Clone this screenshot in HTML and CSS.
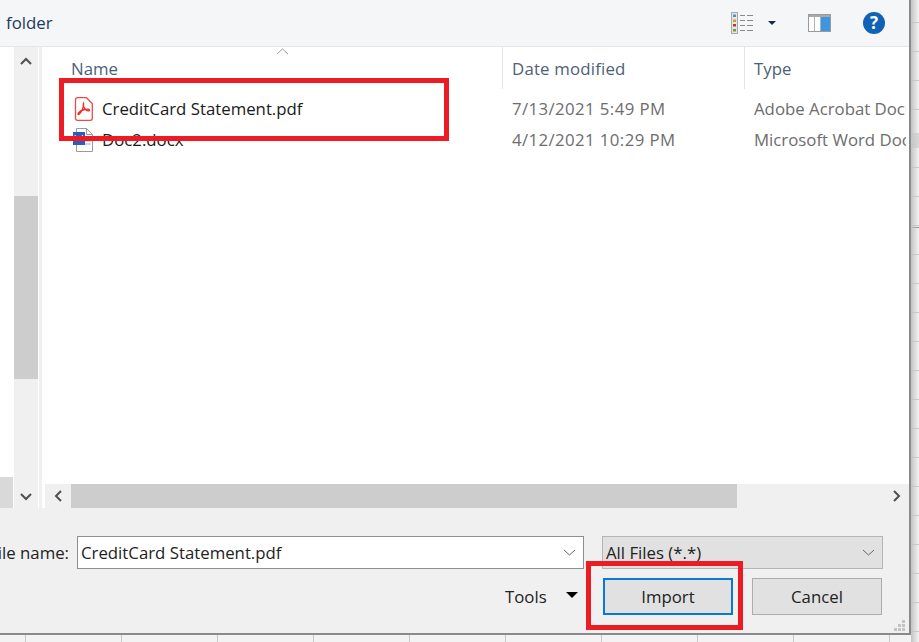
FILE: index.html
```html
<!DOCTYPE html>
<html lang="en">
<head>
    <meta charset="UTF-8">
    <title>Import file</title>
    <link rel="stylesheet" href="styles.css">
</head>
<body>
    <div class="dialog">
        <div class="toolbar">
            <span class="toolbar-title">folder</span>
            <div class="toolbar-icons">
                <svg class="icon-views" width="23" height="22" viewBox="0 0 23 22">
                    <rect x="0.5" y="0.500" width="6" height="21" fill="#e6e6e6" stroke="#a8a8a8"/>
                    <rect x="2" y="2.500" width="3" height="2.500" fill="#5a8fc0"/>
                    <rect x="2" y="7.500" width="3" height="2.500" fill="#c9a227"/>
                    <rect x="2" y="12" width="3" height="2.500" fill="#c8332b"/>
                    <rect x="2" y="17" width="3" height="2.500" fill="#6da04a"/>
                    <path d="M9 3.500h5M16 3.500h6M9 8.500h5M16 8.500h6M9 13.500h5M16 13.500h6M9 18.500h5M16 18.500h6" stroke="#8a8a8a"/>
                </svg>
                <span class="caret-small"></span>
                <svg class="icon-pane" width="23" height="18" viewBox="0 0 23 18">
                    <rect x="0.5" y="0.500" width="22" height="17" fill="#fff" stroke="#9a9a9a"/>
                    <rect x="1" y="1" width="21" height="2" fill="#a9a9a9"/>
                    <rect x="13" y="3" width="9" height="14" fill="#3f96e0"/>
                    <path d="M6.500 3v14M12.500 3v14" stroke="#b0b0b0"/>
                </svg>
                <span class="icon-help">?</span>
            </div>
        </div>

        <div class="browser">
            <div class="nav-pane">
                <div class="nav-left"><div class="nav-selected"></div></div>
                <div class="vscroll">
                    <svg class="chev" width="12" height="8" viewBox="0 0 12 8"><path d="M1 7l5-5 5 5" fill="none" stroke="#505050" stroke-width="2"/></svg>
                    <div class="vtrack"><div class="vthumb"></div></div>
                    <svg class="chev" width="12" height="8" viewBox="0 0 12 8"><path d="M1 1l5 5 5-5" fill="none" stroke="#505050" stroke-width="2"/></svg>
                </div>
            </div>
            <div class="file-pane">
                <div class="file-list">
                    <svg class="sort-arrow" width="13" height="7" viewBox="0 0 13 7"><path d="M1 6l5.500-5 5.500 5" fill="none" stroke="#9b9b9b"/></svg>
                    <div class="file-head">
                        <div class="col-name">Name</div>
                        <div class="col-date">Date modified</div>
                        <div class="col-type">Type</div>
                    </div>
                    <div class="file-row">
                        <div class="col-name file-name">
                            <svg width="20" height="24" viewBox="0 0 20 24">
                                <path d="M4.500.7h9l5.800 5.800v14.800a2 2 0 0 1-2 2H4.500a2 2 0 0 1-2-2V2.700a2 2 0 0 1 2-2z" fill="#fff" stroke="#ee4a44" stroke-width="1.300"/>
                                <path d="M10.500 6.500c-1 2 1 5 2.500 6.500s3.800 1 3.500 0-3.500-.8-6.500 0-5 3-5 4 1.500.6 3-2 3-5 2.500-8.500z" fill="none" stroke="#e8302a" stroke-width="1.300"/>
                            </svg>
                            <span>CreditCard Statement.pdf</span>
                        </div>
                        <div class="col-date">7/13/2021 5:49 PM</div>
                        <div class="col-type">Adobe Acrobat Document</div>
                    </div>
                    <div class="file-row">
                        <div class="col-name file-name">
                            <svg width="20" height="24" viewBox="0 0 20 24">
                                <path d="M3.500.5h10l6 6v17h-16z" fill="#fff" stroke="#9a9a9a"/>
                                <path d="M13.500.5v6h6" fill="none" stroke="#9a9a9a"/>
                                <path d="M12 10h6M12 13h6M12 16h6" stroke="#9fb4d0"/>
                                <rect x="0" y="4" width="12" height="13" fill="#2a5fbd"/>
                                <path d="M2 7l1.500 6 2-5 2 5 2-6" fill="none" stroke="#fff"/>
                            </svg>
                            <span>Doc2.docx</span>
                        </div>
                        <div class="col-date">4/12/2021 10:29 PM</div>
                        <div class="col-type">Microsoft Word Document</div>
                    </div>
                </div>
                <div class="hscroll">
                    <div class="hbtn"><svg width="8" height="12" viewBox="0 0 8 12"><path d="M7 1L2 6l5 5" fill="none" stroke="#505050" stroke-width="2"/></svg></div>
                    <div class="htrack"><div class="hthumb"></div></div>
                    <div class="hbtn"><svg width="8" height="12" viewBox="0 0 8 12"><path d="M1 1l5 5-5 5" fill="none" stroke="#505050" stroke-width="2"/></svg></div>
                </div>
            </div>
        </div>

        <div class="footer">
            <div class="footer-row">
                <div class="file-label"><span>File name:</span></div>
                <div class="name-combo">
                    <span>CreditCard Statement.pdf</span>
                    <svg width="13" height="7" viewBox="0 0 13 7"><path d="M1 1l5.500 5 5.500-5" fill="none" stroke="#666"/></svg>
                </div>
                <div class="type-combo">
                    <span>All Files (*.*)</span>
                    <svg width="13" height="7" viewBox="0 0 13 7"><path d="M1 1l5.500 5 5.500-5" fill="none" stroke="#666"/></svg>
                </div>
            </div>
            <div class="footer-row footer-actions">
                <span class="tools">Tools</span>
                <span class="caret-big"></span>
                <button class="btn btn-primary">Import</button>
                <button class="btn">Cancel</button>
            </div>
            <svg class="grip" width="12" height="12" viewBox="0 0 12 12"><path d="M8 0h3v3H8zM4 4h3v3H4zM8 4h3v3H8zM0 8h3v3H0zM4 8h3v3H4zM8 8h3v3H8z" fill="#c4c4c4"/></svg>
        </div>

        <div class="mark mark-file"></div>
        <div class="mark mark-import"></div>
    </div>

    <div class="sheet"></div>
</body>
</html>
```

FILE: styles.css
```css
html, body {
    margin: 0;
    padding: 0;
    height: 642px;
    overflow: hidden;
}
body {
    display: flex;
    align-items: flex-start;
    background-color: #f3f3f3;
    background-image:
        linear-gradient(to right, #c9c9c9 1px, transparent 1px),
        linear-gradient(#c9c9c9 1px, transparent 1px);
    background-size: 96px 100%, 100% 29px;
    background-position: 25px 0, 0 22px;
    font-family: "Open Sans", "Noto Sans", sans-serif;
    color: #222;
}
.dialog {
    position: relative;
    width: 909px;
    height: 633px;
    flex: none;
    display: flex;
    flex-direction: column;
    background-color: #f0f0f0;
    border-right: 2px solid #8a8a8a;
    border-bottom: 2px solid #8a8a8a;
}
.sheet {
    flex: 1;
    align-self: stretch;
    background-image:
        linear-gradient(to right, #c4c4c4, transparent),
        linear-gradient(to bottom, transparent 133px, #d8d8d8 133px, #d8d8d8 148px, transparent 148px, transparent 227px, #8a8a8a 227px, #8a8a8a 228px, transparent 228px);
}

/* top bar */
.toolbar {
    height: 46px;
    flex: none;
    display: flex;
    align-items: center;
    justify-content: space-between;
    background-color: #f5f6f7;
    border-bottom: 1px solid #e6e6e6;
}
.toolbar-title {
    margin: 0 0 2px 6px;
    font-size: 16.800px;
    color: #1e3a5f;
}
.toolbar-icons {
    display: flex;
    align-items: center;
    margin-right: 24px;
}
.icon-views {
    margin-right: 14px;
}
.caret-small {
    width: 0;
    height: 0;
    border-left: 4px solid transparent;
    border-right: 4px solid transparent;
    border-top: 4px solid #1a2a4a;
    margin-right: 32px;
}
.icon-pane {
    margin-right: 32px;
}
.icon-help {
    width: 22px;
    height: 22px;
    border-radius: 50%;
    background-color: #0f62b5;
    color: #fff;
    font-size: 17px;
    font-weight: 700;
    line-height: 22px;
    text-align: center;
}

/* list area */
.browser {
    flex: 1;
    display: flex;
    background-color: #fff;
    min-height: 0;
}
.nav-pane {
    width: 39px;
    flex: none;
    display: flex;
    background-color: #fff;
    border-right: 3px solid #f0f0f0;
}
.nav-left {
    width: 13px;
    margin-right: 1px;
    display: flex;
    align-items: flex-end;
}
.nav-selected {
    width: 100%;
    height: 31px;
    background-color: #d9d9d9;
}
.vscroll {
    width: 24px;
    display: flex;
    flex-direction: column;
    align-items: center;
    background-color: #f0f0f0;
}
.vscroll .chev {
    margin: 10px 0;
    flex: none;
}
.vscroll .chev:last-child {
    margin: 10px 0 7px;
}
.vtrack {
    flex: 1;
    width: 100%;
}
.vthumb {
    height: 183px;
    margin-top: 121px;
    background-color: #cdcdcd;
}
.file-pane {
    flex: 1;
    display: flex;
    flex-direction: column;
    min-width: 0;
}
.file-list {
    position: relative;
    flex: 1;
    overflow: hidden;
    padding-right: 3px;
}
.sort-arrow {
    position: absolute;
    left: 234px;
    top: 1px;
}
.file-head {
    display: flex;
    height: 42px;
    margin-bottom: 4px;
    color: #4c607a;
    font-size: 16.800px;
    line-height: 43px;
}
.file-head .col-date,
.file-head .col-type {
    border-left: 1px solid #e5e5e5;
}
.file-head .col-date {
    letter-spacing: 0.200px;
}
.col-name {
    width: 460px;
    padding-left: 29px;
    box-sizing: border-box;
    flex: none;
}
.col-date {
    width: 242px;
    padding-left: 9px;
    box-sizing: border-box;
    flex: none;
}
.col-type {
    flex: 1;
    padding-left: 9px;
    white-space: nowrap;
    overflow: hidden;
}
.file-row {
    display: flex;
    height: 31px;
    align-items: center;
    font-size: 16.800px;
    color: #6d6d6d;
}
.file-row .col-date {
    letter-spacing: 0.400px;
}
.file-row .col-date,
.file-row .col-type {
    padding-left: 10px;
}
.file-row .col-name {
    padding-left: 31px;
}
.file-name {
    display: flex;
    align-items: center;
    gap: 9px;
    color: #1a1a1a;
}
.hscroll {
    height: 24px;
    flex: none;
    margin-left: 3px;
    display: flex;
    background-color: #f0f0f0;
}
.hbtn {
    width: 25px;
    flex: none;
    display: flex;
    align-items: center;
    justify-content: center;
}
.htrack {
    flex: 1;
    margin-left: 1px;
}
.hthumb {
    width: 666px;
    height: 100%;
    background-color: #cdcdcd;
}

/* file name and buttons */
.footer {
    position: relative;
    height: 125px;
    flex: none;
    background-color: #f0f0f0;
    padding-top: 28px;
    box-sizing: border-box;
}
.footer-row {
    display: flex;
    align-items: center;
}
.file-label {
    width: 69px;
    flex: none;
    display: flex;
    justify-content: flex-end;
    font-size: 16.800px;
    white-space: nowrap;
}
.file-label span {
    flex: none;
}
.name-combo, .type-combo {
    display: flex;
    align-items: center;
    justify-content: space-between;
    height: 33px;
    box-sizing: border-box;
    font-size: 16.800px;
    border: 1px solid #8f8f8f;
    background-color: #fff;
}
.name-combo {
    width: 507px;
    margin-left: 8px;
    padding: 0 7px 0 3px;
}
.type-combo {
    width: 281px;
    margin-left: 18px;
    background-color: #e1e1e1;
    border-color: #b5b5b5;
    padding: 0 7px 0 3px;
}
.footer-actions {
    margin-top: 9px;
    padding-left: 505px;
}
.tools {
    width: 61px;
    flex: none;
    font-size: 16.800px;
}
.caret-big {
    width: 0;
    height: 0;
    margin-right: 25px;
    border-left: 6px solid transparent;
    border-right: 6px solid transparent;
    border-top: 6px solid #000;
    position: relative;
    top: -2px;
}
.btn {
    width: 130px;
    height: 37px;
    margin: 0 19px 0 0;
    padding: 0;
    font-family: inherit;
    font-size: 16.800px;
    color: #222;
    background-color: #e1e1e1;
    border: 1px solid #adadad;
    box-sizing: border-box;
}
.btn-primary {
    border: 2px solid #0a78d7;
}
.grip {
    position: absolute;
    right: 3px;
    bottom: 1px;
}

/* red annotation boxes */
.mark {
    position: absolute;
    border: 5px solid #ed1c24;
    box-sizing: border-box;
}
.mark-file {
    left: 59px;
    top: 78px;
    width: 390px;
    height: 63px;
}
.mark-import {
    left: 586px;
    top: 561px;
    width: 157px;
    height: 69px;
}
```
